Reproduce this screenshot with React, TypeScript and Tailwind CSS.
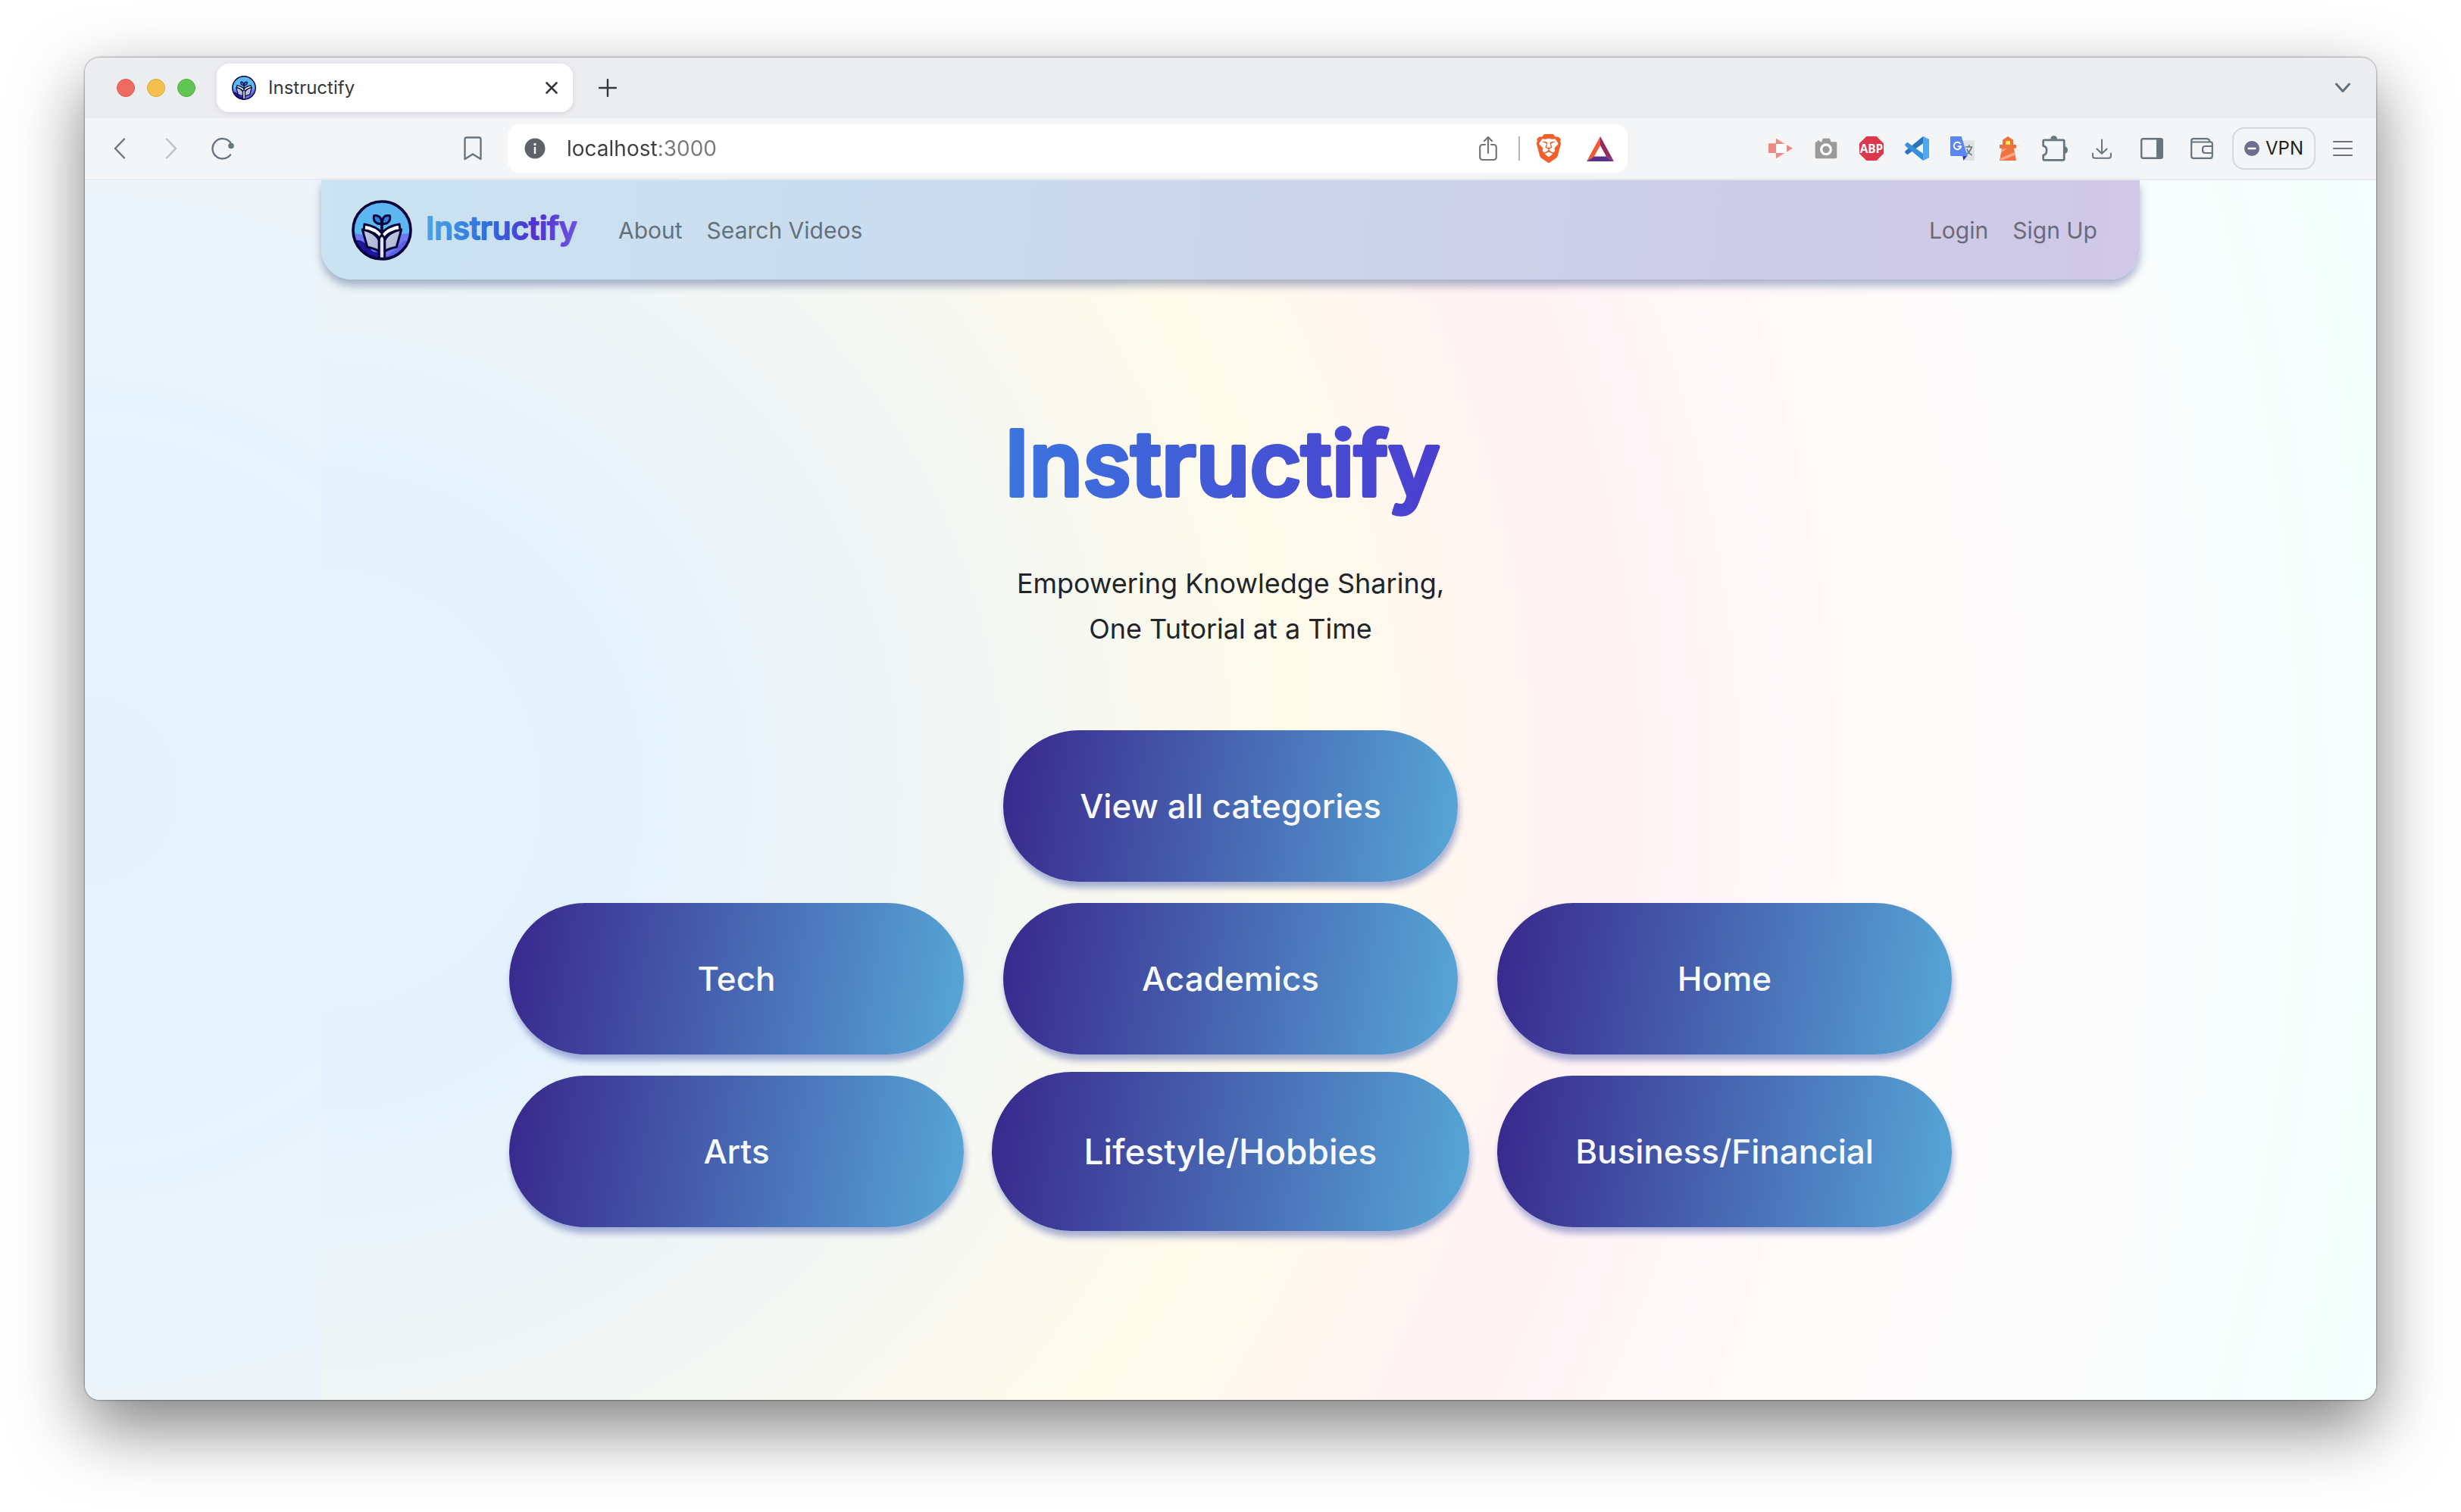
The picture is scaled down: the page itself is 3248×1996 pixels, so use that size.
import React from "react";
import { SiBrave } from "react-icons/si";

function Logo({ className }: { className: string }) {
  return (
    <svg viewBox="0 0 240 240" className={className} aria-hidden="true">
      <defs>
        <clipPath id="logo-disc">
          <circle cx="120" cy="120" r="114" />
        </clipPath>
        <linearGradient id="logo-sky" x1="0" y1="0" x2="0" y2="1">
          <stop offset="0" stopColor="#5fb4f1" />
          <stop offset="1" stopColor="#55bdf0" />
        </linearGradient>
        <linearGradient id="logo-page" x1="0" y1="0" x2="1" y2="1">
          <stop offset="0" stopColor="#c6cde2" />
          <stop offset="1" stopColor="#a9b2d2" />
        </linearGradient>
      </defs>
      <g clipPath="url(#logo-disc)">
        <rect width="240" height="240" fill="url(#logo-sky)" />
        <path d="M0 132 C30 132 50 140 120 170 C180 130 210 136 240 130 V240 H0 Z" fill="#6f78ee" />
        <path d="M0 160 C30 155 50 162 70 190 L120 240 H0 Z" fill="#1d159a" />
        <path d="M240 160 C210 158 195 165 180 190 L120 240 H240 Z" fill="#5a60e4" />
        <path d="M56 202 L108 208 V240 H80 Z" fill="#1d159a" />
      </g>
      <g stroke="#07043a" strokeWidth="9" strokeLinejoin="round" strokeLinecap="round">
        <path d="M120 128 V92" fill="none" strokeWidth="11" />
        <path d="M119 95 C94 97 84 80 89 62 C108 58 120 70 119 95 Z" fill="#2d7fe6" />
        <path d="M121 95 C146 97 156 80 151 62 C132 58 120 70 121 95 Z" fill="#2d7fe6" />
        <path d="M51 96 C80 101 106 112 120 132 C134 112 160 101 189 96 L192 118 C165 124 140 134 130 152 L120 160 L110 152 C100 134 75 124 48 118 Z" fill="#ffffff" />
        <path d="M43 117 L62 186 C80 190 98 194 109 204 V160 C100 138 72 122 43 117 Z" fill="url(#logo-page)" />
        <path d="M197 117 L178 186 C160 190 142 194 131 204 V160 C140 138 168 122 197 117 Z" fill="url(#logo-page)" />
        <path d="M109 232 V154 C111 146 116 143 120 138 C124 143 129 146 131 154 V232 Z" fill="#dfe3f0" />
      </g>
      <circle cx="120" cy="120" r="114" fill="none" stroke="#07043a" strokeWidth="11" />
    </svg>
  );
}

function NavWordmark() {
  return (
    <svg viewBox="0 0 208 56" className="h-14 w-[208px]">
      <defs>
        <linearGradient id="brand-nav" gradientUnits="userSpaceOnUse" x1="0" y1="10" x2="204" y2="36">
          <stop offset="0" stopColor="#4ba6e3" />
          <stop offset="0.4" stopColor="#2f6fdf" />
          <stop offset="0.7" stopColor="#5132cf" />
          <stop offset="1" stopColor="#6f56e0" />
        </linearGradient>
      </defs>
      <text
        x="0"
        y="40"
        fill="url(#brand-nav)"
        stroke="url(#brand-nav)"
        strokeWidth="2"
        strokeLinejoin="round"
        className="font-['Inter',sans-serif] text-[41px] font-medium"
      >
        Instructify
      </text>
    </svg>
  );
}

function HeroWordmark() {
  return (
    <svg viewBox="0 0 600 150" className="h-[150px] w-[600px]">
      <defs>
        <linearGradient id="brand-hero" gradientUnits="userSpaceOnUse" x1="0" y1="0" x2="600" y2="80">
          <stop offset="0" stopColor="#3a76df" />
          <stop offset="1" stopColor="#4c3ccf" />
        </linearGradient>
      </defs>
      <text
        x="2"
        y="114"
        fill="url(#brand-hero)"
        stroke="url(#brand-hero)"
        strokeWidth="6"
        strokeLinejoin="round"
        className="font-['Inter',sans-serif] text-[118px] font-medium"
      >
        Instructify
      </text>
    </svg>
  );
}

type IconButtonProps = { label: string; className?: string; children: React.ReactNode };

function IconButton({ label, className = "w-8", children }: IconButtonProps) {
  return (
    <button type="button" aria-label={label} className={`flex h-10 shrink-0 items-center justify-center ${className}`}>
      {children}
    </button>
  );
}

function TabStrip() {
  return (
    <div className="flex h-20 items-center bg-[#ecedf1] pl-[42px] pr-6">
      <div className="flex gap-4">
        <button type="button" aria-label="Close window" className="size-6 rounded-full border border-[#d9594d] bg-[#ed6a5e]" />
        <button type="button" aria-label="Minimize window" className="size-6 rounded-full border border-[#dda63c] bg-[#f5bf4f]" />
        <button type="button" aria-label="Zoom window" className="size-6 rounded-full border border-[#51ad42] bg-[#61c554]" />
      </div>
      <div className="ml-7 flex h-16 w-[470px] items-center rounded-2xl bg-white pl-5 pr-2 shadow-[0_2px_8px_rgba(60,50,90,0.12)]">
        <Logo className="size-8" />
        <span className="ml-4 flex-1 text-2xl text-[#34383c]">Instructify</span>
        <IconButton label="Close tab" className="w-10">
          <svg viewBox="0 0 16 16" className="size-4" fill="none" stroke="#34383c" strokeWidth="2.6" strokeLinecap="round">
            <path d="M1.5 1.5 L14.5 14.5 M14.5 1.5 L1.5 14.5" />
          </svg>
        </IconButton>
      </div>
      <IconButton label="New tab" className="ml-[26px] w-10">
        <svg viewBox="0 0 24 24" className="size-6" fill="none" stroke="#34383c" strokeWidth="2.4" strokeLinecap="round">
          <path d="M12 1 V23 M1 12 H23" />
        </svg>
      </IconButton>
      <IconButton label="Search tabs" className="ml-auto w-10">
        <svg viewBox="0 0 20 14" className="h-3.5 w-5" fill="none" stroke="#62717b" strokeWidth="3" strokeLinecap="round" strokeLinejoin="round">
          <path d="M1.5 2 L10 11.5 L18.5 2" />
        </svg>
      </IconButton>
    </div>
  );
}

function AddressBar() {
  return (
    <div className="ml-[26px] flex h-16 min-w-0 flex-1 items-center rounded-2xl bg-white pl-[22px] pr-[18px]">
      <button type="button" aria-label="Site information" className="shrink-0">
        <svg viewBox="0 0 28 28" className="size-7">
          <circle cx="14" cy="14" r="13.5" fill="#5f6368" />
          <circle cx="14" cy="8.5" r="1.7" fill="#fff" />
          <rect x="12.8" y="12" width="2.4" height="9" fill="#fff" />
        </svg>
      </button>
      <input
        type="text"
        aria-label="Address"
        defaultValue="localhost:3000"
        className="ml-7 min-w-0 flex-1 bg-[linear-gradient(90deg,#3a3d41_121px,#777a7d_121px)] bg-clip-text text-[28px] leading-10 text-transparent outline-none"
      />
      <IconButton label="Share" className="w-[26px]">
        <svg viewBox="0 0 24 34" className="h-[34px] w-6" fill="none" stroke="#757575" strokeWidth="2.2" strokeLinecap="round" strokeLinejoin="round">
          <path d="M8 12 H4.5 A3.4 3.4 0 0 0 1.2 15.4 V28.6 A3.4 3.4 0 0 0 4.6 32 H19.4 A3.4 3.4 0 0 0 22.8 28.6 V15.4 A3.4 3.4 0 0 0 19.5 12 H16" />
          <path d="M12 23 V2 M6.8 7.2 L12 2 L17.2 7.2" />
        </svg>
      </IconButton>
      <span className="ml-[27px] h-8 w-0.5 bg-[#b5b5b5]" />
      <IconButton label="Brave Shields" className="ml-[22px] w-8">
        <SiBrave className="size-[38px] shrink-0 text-[#f1602b]" />
      </IconButton>
      <IconButton label="Brave Rewards" className="ml-[34px] w-9">
        <svg viewBox="0 0 36 33" className="h-[33px] w-9">
          <path d="M18 0 V12 L10 26.5 L0 33 Z" fill="#f15a33" />
          <path d="M18 0 V12 L26 26.5 L36 33 Z" fill="#942b60" />
          <path d="M0 33 L10 26.5 H26 L36 33 Z" fill="#5e2e8c" />
        </svg>
      </IconButton>
    </div>
  );
}

function Extensions() {
  return (
    <div className="flex items-center gap-7">
      <IconButton label="Screen recorder">
        <svg viewBox="0 0 96 84" className="h-7 w-8">
          <path d="M0 22 H30 V60 H0 Z M30 2 L64 24 H30 Z M30 82 L64 60 H30 Z M72 28 L96 41 L72 56 Z" fill="#f08984" />
          <path d="M30 24 H58 V34 L72 24 V60 L58 50 V60 H30 Z" fill="#fff" />
        </svg>
      </IconButton>
      <IconButton label="Screenshot">
        <svg viewBox="0 0 90 84" className="h-7 w-[30px]">
          <path d="M8 16 L14 8 L22 16 H28 L32 2 H60 L64 16 H82 Q88 16 88 22 V76 Q88 82 82 82 H8 Q2 82 2 76 V22 Q2 16 8 16 Z" fill="#9a9a9a" />
          <circle cx="45" cy="46" r="19" fill="none" stroke="#fff" strokeWidth="10" />
        </svg>
      </IconButton>
      <IconButton label="Adblock Plus">
        <svg viewBox="0 0 96 96" className="size-8">
          <path d="M28 0 H68 L96 28 V68 L68 96 H28 L0 68 V28 Z" fill="#dc374c" />
          <text x="48" y="65" textAnchor="middle" fill="#fff" className="font-['Open_Sans',sans-serif] text-[46px] font-bold">
            ABP
          </text>
        </svg>
      </IconButton>
      <IconButton label="VS Code">
        <svg viewBox="0 0 96 96" className="size-8">
          <path d="M0 64 L10 73 L72 28 V0 L2 58 Z" fill="#2c74b8" />
          <path d="M0 32 L10 23 L72 68 V96 L2 38 Z" fill="#3a8fda" />
          <path d="M72 0 L96 11 V85 L72 96 Z" fill="#4fa9f2" />
        </svg>
      </IconButton>
      <IconButton label="Translate">
        <svg viewBox="0 0 96 96" className="size-8">
          <path d="M40 16 H92 Q96 16 96 20 V92 Q96 96 92 96 H56 Z" fill="#dfe1e3" />
          <path d="M60 42 H88 M74 34 V42 M84 43 C80 58 70 68 60 74 M66 50 C70 62 78 70 86 74" fill="none" stroke="#607d86" strokeWidth="5" />
          <path d="M48 76 H68 L52 96 Z" fill="#2f3fae" />
          <path d="M4 0 H44 L68 78 H4 Q0 78 0 74 V4 Q0 0 4 0 Z" fill="#5a87ee" />
          <path d="M40 30 A14 14 0 1 0 42 40 H29" fill="none" stroke="#fff" strokeWidth="6" />
        </svg>
      </IconButton>
      <IconButton label="Lighthouse">
        <svg viewBox="0 0 66 96" className="h-8 w-[22px]">
          <path d="M33 0 L54 14 V33 H66 V47 H57 L66 96 H0 L9 47 H0 V33 H12 V14 Z" fill="#f0713f" />
          <path d="M25 19 H42 V33 H25 Z" fill="#fff350" />
          <path d="M8 54 L20 48 H30 L6 66 Z M4 86 L60 62 L62 74 L12 94 H2 Z" fill="#f7a988" />
        </svg>
      </IconButton>
      <IconButton label="Extensions" className="w-9">
        <svg viewBox="0 0 100 100" className="size-[34px]">
          <path
            d="M10 17 H82 Q86 17 86 21 V91 Q86 95 82 95 H10 Q5 95 5 91 V76 Q18 74 18 57 Q18 42 5 40 V21 Q5 17 10 17 Z"
            fill="none"
            stroke="#66757e"
            strokeWidth="8"
            strokeLinejoin="round"
          />
          <path d="M33 14 Q34 1 46 1 Q58 1 59 14 Z M88 42 Q100 44 100 56 Q100 68 88 70 Z" fill="#66757e" />
        </svg>
      </IconButton>
      <IconButton label="Downloads">
        <svg viewBox="0 0 78 80" className="h-[27px] w-[26px]" fill="none" stroke="#66757e" strokeWidth="6" strokeLinecap="round" strokeLinejoin="round">
          <path d="M39 4 V58 M19 40 L39 59 L59 40" />
          <path d="M3 58 V68 Q3 77 12 77 H66 Q75 77 75 68 V58" />
        </svg>
      </IconButton>
    </div>
  );
}

function Toolbar() {
  return (
    <div className="flex h-[82px] items-center border-b-2 border-[#e9ebef] bg-[#f3f5f7] pl-[26px] pr-[30px]">
      <div className="flex gap-7">
        <IconButton label="Back" className="w-10">
          <svg viewBox="0 0 16 28" className="h-7 w-4" fill="none" stroke="#66757e" strokeWidth="2.4" strokeLinecap="round" strokeLinejoin="round">
            <path d="M14 1.5 L2 14 L14 26.5" />
          </svg>
        </IconButton>
        <IconButton label="Forward" className="w-10">
          <svg viewBox="0 0 16 28" className="h-7 w-4" fill="none" stroke="#b9c1c7" strokeWidth="2.4" strokeLinecap="round" strokeLinejoin="round">
            <path d="M2 1.5 L14 14 L2 26.5" />
          </svg>
        </IconButton>
        <IconButton label="Reload" className="w-10">
          <svg viewBox="0 0 32 30" className="h-[30px] w-8">
            <path d="M26 7 A13.2 13.2 0 1 0 26 23.5" fill="none" stroke="#66757e" strokeWidth="2.4" strokeLinecap="round" />
            <circle cx="27" cy="11.5" r="3.8" fill="#66757e" />
          </svg>
        </IconButton>
      </div>
      <IconButton label="Bookmark this page" className="ml-[290px] w-10">
        <svg viewBox="0 0 24 32" className="h-8 w-6" fill="none" stroke="#66757e" strokeWidth="2.4" strokeLinejoin="round">
          <path d="M4 1.5 H20 Q22.5 1.5 22.5 4 V30 L12 23.5 L1.5 30 V4 Q1.5 1.5 4 1.5 Z" />
        </svg>
      </IconButton>
      <AddressBar />
      <div className="ml-[186px] flex items-center gap-[34px]">
        <Extensions />
        <IconButton label="Sidebar">
          <svg viewBox="0 0 30 28" className="h-7 w-[30px]">
            <rect x="1.2" y="1.2" width="27.6" height="25.6" rx="2" fill="none" stroke="#66757e" strokeWidth="2.4" />
            <rect x="21" y="1" width="8" height="26" fill="#66757e" />
          </svg>
        </IconButton>
        <IconButton label="Wallet">
          <svg viewBox="0 0 30 28" className="h-7 w-[30px]" fill="none" stroke="#66757e" strokeWidth="2.2" strokeLinejoin="round">
            <path d="M28.8 11 V7.5 Q28.8 5.5 26.8 5.5 H1.2 V24 Q1.2 26.8 4 26.8 H26 Q28.8 26.8 28.8 24 V20" />
            <path d="M1.2 6 V4 Q1.2 1.2 4 1.2 H21 Q25 1.2 25.5 5.5" />
            <path d="M28.8 11 H19.5 Q16 11 16 14.5 V16.5 Q16 20 19.5 20 H28.8 Z" />
          </svg>
        </IconButton>
      </div>
      <button type="button" className="ml-6 flex h-14 w-[110px] shrink-0 items-center justify-center gap-2 rounded-2xl border-2 border-[#d3dadf] text-2xl text-[#1d1d22]">
        <svg viewBox="0 0 20 20" className="size-5" aria-hidden="true">
          <circle cx="10" cy="10" r="10" fill="#6d6f8c" />
          <rect x="4.5" y="8.8" width="11" height="2.4" rx="1" fill="#fff" />
        </svg>
        VPN
      </button>
      <IconButton label="Menu" className="ml-[22px] w-7">
        <svg viewBox="0 0 26 22" className="h-[22px] w-[26px]" stroke="#66757e" strokeWidth="2" strokeLinecap="round">
          <path d="M1 2 H25 M1 11 H25 M1 20 H25" />
        </svg>
      </IconButton>
    </div>
  );
}

function SiteNav() {
  return (
    <nav className="flex h-[131px] items-center rounded-b-[40px] bg-[linear-gradient(96deg,#cae3f0_0%,#cadcef_30%,#ccd2e8_62%,#cdcde8_75%,#cfc8e6_100%)] pl-10 pr-14 text-[30px] text-[#65707a] shadow-[0_8px_12px_rgba(70,90,140,0.45)]">
      <a href="#home" className="flex items-center gap-[18px]">
        <Logo className="size-20" />
        <NavWordmark />
      </a>
      <a href="#about" className="ml-[46px] pt-0.5">About</a>
      <a href="#search" className="ml-8 pt-0.5">Search Videos</a>
      <a href="#login" className="ml-auto pt-0.5 text-[#6a6a78]">Login</a>
      <a href="#signup" className="ml-8 pt-0.5 text-[#6a6a78]">Sign Up</a>
    </nav>
  );
}

const pill =
  "rounded-full bg-[linear-gradient(98deg,#392a8e_2%,#4b76bb_62%,#56a5d5_98%)] font-medium text-[#f8f9fa] shadow-[2px_8px_8px_rgba(65,85,170,0.45)]";

const categories = ["Tech", "Academics", "Home", "Arts", "Lifestyle/Hobbies", "Business/Financial"];
const hovered = "Lifestyle/Hobbies";

function Home() {
  return (
    <main className="flex flex-col items-center px-8 pt-[171px] pb-[228px]">
      <h1>
        <HeroWordmark />
      </h1>
      <p className="mt-[50px] text-center text-4xl leading-[60px] text-[#212529]">
        Empowering Knowledge Sharing,
        <br />
        One Tutorial at a Time
      </p>
      <div className="mt-[104px] grid w-full max-w-[1904px] grid-cols-3 gap-x-[52px] gap-y-7">
        <button type="button" className={`col-start-2 h-[200px] text-[44px] ${pill}`}>
          View all categories
        </button>
        <div />
        {categories.map((name) => (
          <button
            key={name}
            type="button"
            className={`${name === hovered ? "-mx-[15px] -my-[5px] h-[210px] text-[46px]" : "h-[200px] text-[44px]"} ${pill}`}
          >
            {name}
          </button>
        ))}
      </div>
    </main>
  );
}

export default function App() {
  return (
    <div className="flex min-h-screen flex-col bg-white px-28 pt-[76px] pb-[148px] font-['Inter',sans-serif]">
      <div className="flex flex-1 flex-col overflow-hidden rounded-[20px] shadow-[0_0_2px_1px_rgba(0,0,0,0.3),0_36px_90px_rgba(0,0,0,0.5)]">
        <TabStrip />
        <Toolbar />
        <div className="flex flex-1 flex-col bg-[radial-gradient(circle_at_left,#e5f2fe_0%,#e7f4fe_14%,#edf5fa_28%,#fafcfd_86%,#f2fffc_100%)]">
          <div className="mx-auto w-full max-w-[2400px] flex-1 bg-[radial-gradient(circle_at_left,#e6f4fd_0%,#e5f2fe_16%,#f5f7f2_38%,#fffbea_51%,#fff2f5_67%,#fffafa_81%,#fbfdfd_100%)]">
            <SiteNav />
            <Home />
          </div>
        </div>
      </div>
    </div>
  );
}
